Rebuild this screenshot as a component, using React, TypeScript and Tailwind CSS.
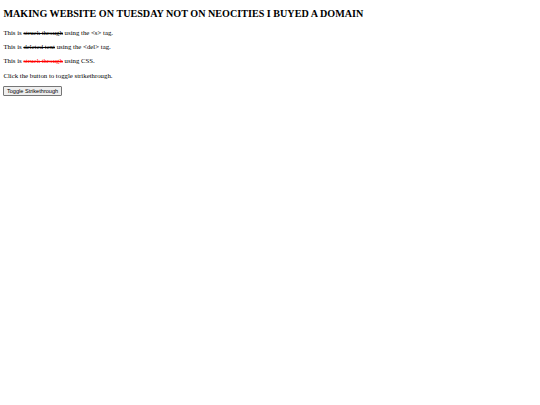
import React, { useState } from "react";

export default function App() {
  const [on, setOn] = useState(true);
  return (
    <div className="min-h-[405px] bg-white px-[3.4px] pt-[0.1px] pb-[3.4px] text-black [font-family:'Liberation_Serif',serif] text-[6.8px] leading-[1.15]">
      <h2 className="mt-[8.4px] mb-[8.4px] text-[10.15px] font-bold leading-[1.15]">
        MAKING WEBSITE ON TUESDAY NOT ON NEOCITIES I BUYED A DOMAIN
      </h2>
      <p className="my-[6.6px]">
        This is <s>struck through</s> using the &lt;s&gt; tag.
      </p>
      <p className="my-[6.6px]">
        This is <del>deleted text</del> using the &lt;del&gt; tag.
      </p>
      <p className="my-[6.6px]">
        This is{" "}
        <span className={on ? "text-[#ff0000] line-through" : "text-[#ff0000]"}>struck through</span>{" "}
        using CSS.
      </p>
      <p className="my-[6.6px]">Click the button to toggle strikethrough.</p>
      <button
        onClick={() => setOn(!on)}
        className="rounded-[1px] border-[0.5px] border-[#767676] bg-[#efefef] px-[2.5px] py-[0.5px] text-[5.6px] leading-[1.15] [font-family:'Liberation_Sans',sans-serif]"
      >
        Toggle Strikethrough
      </button>
    </div>
  );
}
